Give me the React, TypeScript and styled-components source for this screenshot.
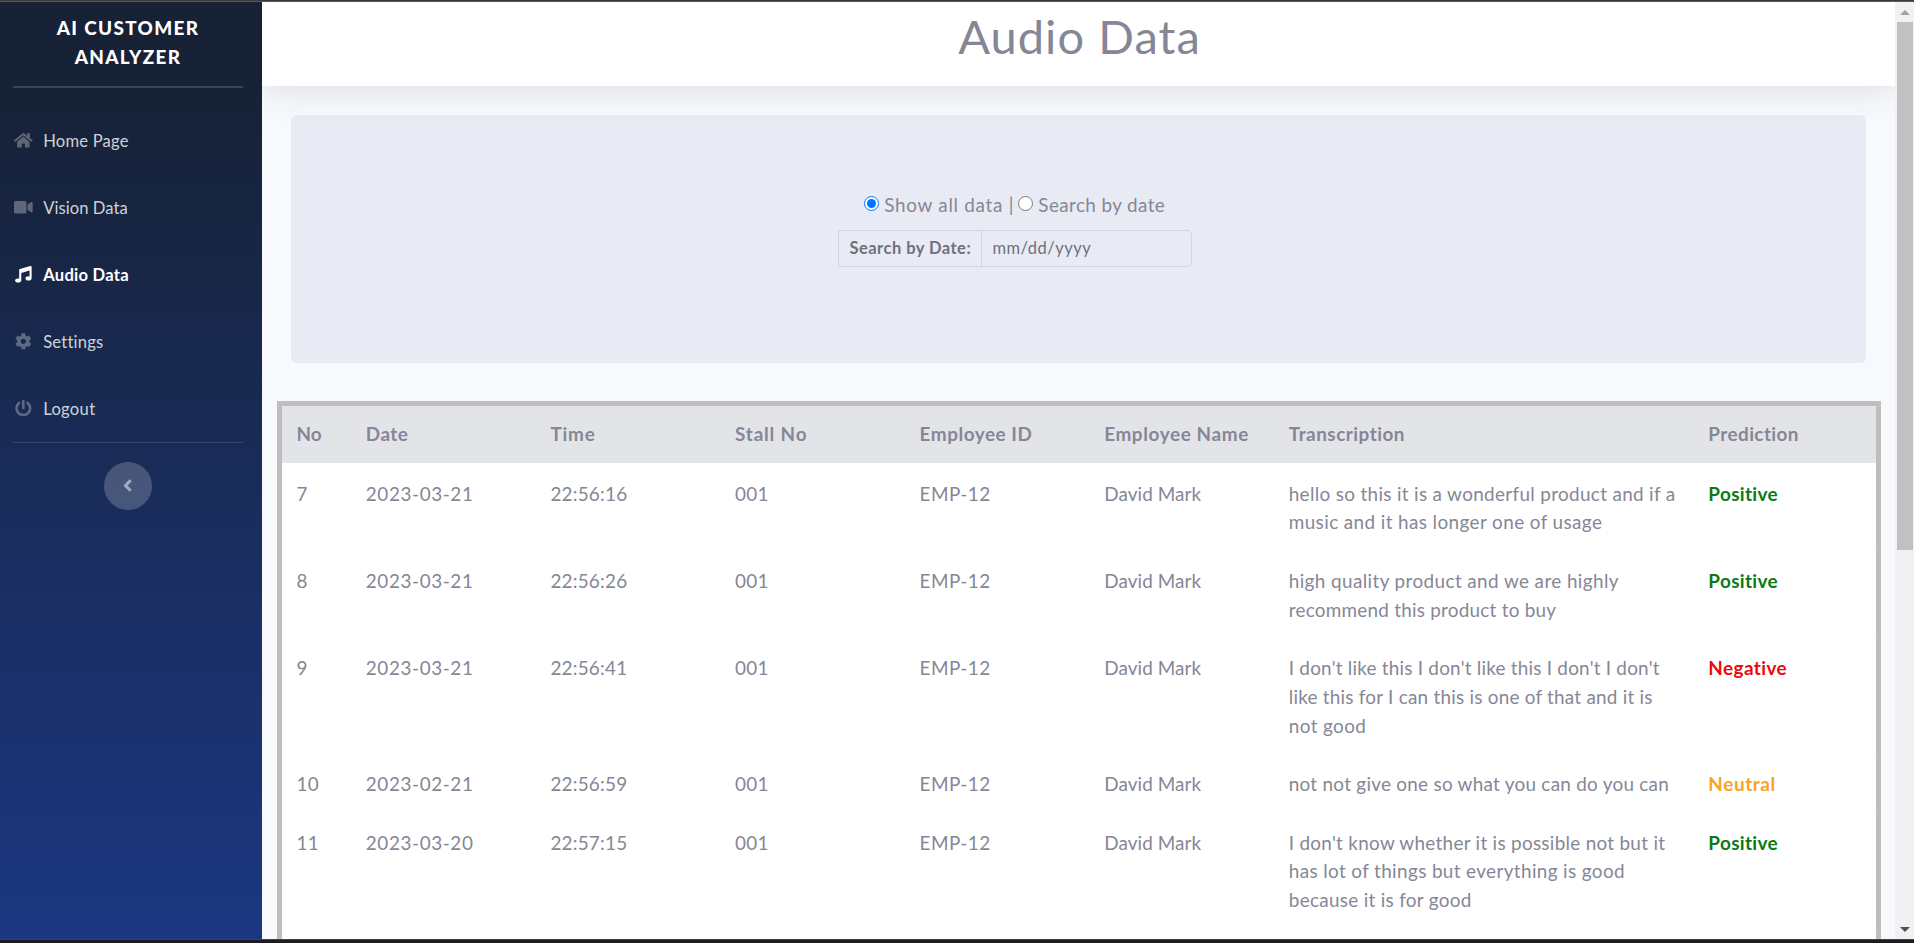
import React from 'react';
import styled, { createGlobalStyle } from 'styled-components';
import { FaHome, FaVideo, FaMusic, FaCog, FaPowerOff, FaAngleLeft } from 'react-icons/fa';
import type { IconType } from 'react-icons';

const GlobalStyle = createGlobalStyle`
  *, *::before, *::after { box-sizing: border-box; }
  html, body { margin: 0; height: 100%; overflow: hidden; }
  body {
    font-family: Lato, 'Open Sans', sans-serif;
    font-size: 18.9px;
    line-height: 28.8px;
    color: #858796;
    background: #f8f9fd;
  }
  #root { height: 100%; }
`;

const Screen = styled.div`
  height: 943px;
  display: flex;
  flex-direction: column;
  overflow: hidden;
`;

const TopEdge = styled.div`
  flex: none;
  height: 2px;
  background: #3b393a;
  border-bottom: 1px solid #5a5758;
`;

const BottomEdge = styled.div`
  flex: none;
  height: 4px;
  background: #1d1b1f;
  border-top: 1px solid #434247;
`;

const Body = styled.div`
  flex: 1;
  min-height: 0;
  display: flex;
`;

const Sidebar = styled.nav`
  flex: none;
  width: 262px;
  padding: 0 19px 0 13px;
  background: linear-gradient(180deg, #172237 10%, #1c3782 100%);
`;

const Brand = styled.div`
  display: flex;
  flex-direction: column;
  align-items: center;
  gap: 0.4px;
  width: 230px;
  height: 84px;
  padding-top: 12.2px;
  color: #fff;
  font-weight: 900;
`;

const Track = styled.span<{ $ls: number }>`
  display: block;
  white-space: nowrap;
  letter-spacing: ${(p) => p.$ls}px;
`;

const BrandRule = styled.hr`
  height: 2px;
  margin: 0 0 19px;
  border: 0;
  background: #3a4558;
`;

const MenuItem = styled.a<{ $active?: boolean }>`
  display: flex;
  align-items: center;
  height: 67px;
  color: ${(p) => (p.$active ? '#fff' : 'rgba(255, 255, 255, 0.8)')};
  font-size: 16.6px;
  font-weight: ${(p) => (p.$active ? 700 : 400)};
`;

const MenuLabel = styled(Track)`
  padding-top: 1.6px;
`;

const MenuIcon = styled.span<{ $active?: boolean }>`
  display: flex;
  justify-content: center;
  width: 21px;
  margin-right: 9.2px;
  font-size: 16.6px;
  color: ${(p) => (p.$active ? '#fff' : 'rgba(255, 255, 255, 0.3)')};
  svg { flex: none; width: 1.125em; height: 1em; }
`;

const MenuRule = styled.hr`
  height: 1px;
  margin: 0 0 19px;
  border: 0;
  background: #36456d;
`;

const Collapse = styled.button`
  display: flex;
  align-items: center;
  justify-content: center;
  width: 48px;
  height: 48px;
  margin: 0 0 0 91px;
  padding: 0;
  border: 0;
  border-radius: 50%;
  background: rgba(255, 255, 255, 0.2);
  color: rgba(255, 255, 255, 0.5);
  font-size: 19.2px;
`;

const Content = styled.main`
  flex: 1;
  min-width: 0;
  display: flex;
  flex-direction: column;
  overflow: hidden;
  background: #f8f9fd;
`;

const Header = styled.header`
  flex: none;
  height: 84px;
  display: flex;
  justify-content: center;
  background: #fff;
  box-shadow: 0 2.9px 33.6px 0 rgba(58, 59, 69, 0.15);
`;

const Title = styled.h1`
  margin: 5.4px 0 0 2px;
  font-size: 47px;
  line-height: 58px;
  font-weight: 400;
  letter-spacing: 1.05px;
`;

const Panel = styled.section`
  flex: none;
  height: 248px;
  margin: 29px 29px 38px;
  padding: 76px 128px 0 0;
  display: flex;
  flex-direction: column;
  align-items: center;
  border-radius: 6px;
  background: #e8ebf4;
  z-index: 1;
`;

const Choices = styled.div`
  display: flex;
  align-items: center;
  height: 29px;
  margin-bottom: 10px;
`;

const Radio = styled.input`
  width: 15px;
  height: 15px;
  margin: 0 5.4px 5px 0;
`;

const Divider = styled.span`
  margin: 0 4.5px 0 5.5px;
`;

const DateField = styled.div`
  display: flex;
  width: 354px;
  height: 37px;
  border: 1px solid #d1d3e2;
  border-radius: 0 5px 5px 0;
  color: #6e707e;
  font-size: 16.5px;
  line-height: 35px;
`;

const DateLabel = styled.label`
  width: 143px;
  padding-left: 11px;
  border-right: 1px solid #d1d3e2;
  font-weight: 700;
`;

const DateValue = styled.div`
  padding-left: 11px;
`;

const Table = styled.div`
  flex: none;
  width: 1604px;
  height: 700px;
  margin-left: 15px;
  border: 5px solid #c2bdbd;
  background: #fff;
`;

const TableBody = styled.div`
  padding-top: 2.2px;
`;

const Row = styled.div<{ $head?: boolean }>`
  display: grid;
  grid-template-columns: 69.4px repeat(5, 184.6px) 419.6px 1fr;
  padding: ${(p) => (p.$head ? '14px 0 14.2px' : '14.4px 0 14.3px')};
  border-bottom: ${(p) => (p.$head ? '0' : '1px solid #fcfcfd')};
  background: ${(p) => (p.$head ? '#e3e4e8' : 'transparent')};
  font-weight: ${(p) => (p.$head ? 700 : 400)};
`;

const Cell = styled.div`
  padding-left: 14.4px;
`;

const tones = { Positive: '#0b7a12', Negative: '#ea0a0a', Neutral: '#faa21e' };
type Tone = keyof typeof tones;

const Verdict = styled(Cell)<{ $tone: Tone }>`
  color: ${(p) => tones[p.$tone]};
  font-weight: 700;
`;

const ScrollBar = styled.div`
  flex: none;
  width: 19px;
  display: flex;
  flex-direction: column;
  align-items: center;
  padding: 8px 0 7px;
  background: #f1f1f1;
`;

const Arrow = styled.svg`
  flex: none;
  display: block;
  width: 10px;
  height: 5px;
`;

const Thumb = styled.div`
  width: 16px;
  height: 528px;
  margin: 7px 0 auto;
  background: #c1c1c1;
`;

type Line = [text: string, spacing: number];

const menu: { icon: IconType; label: Line; active?: boolean }[] = [
  { icon: FaHome, label: ['Home Page', 0.2] },
  { icon: FaVideo, label: ['Vision Data', 0.05] },
  { icon: FaMusic, label: ['Audio Data', 0.25], active: true },
  { icon: FaCog, label: ['Settings', 0.2] },
  { icon: FaPowerOff, label: ['Logout', 0.3] },
];

const columns: Line[] = [
  ['No', 0.04],
  ['Date', 0.5],
  ['Time', 0.8],
  ['Stall No', 0.85],
  ['Employee ID', 0.55],
  ['Employee Name', 0.62],
  ['Transcription', 0.5],
  ['Prediction', 0.42],
];

const verdictSpacing: Record<Tone, number> = { Positive: 0.35, Negative: 0.42, Neutral: 0.6 };

const records: { no: string; date: string; time: string; lines: Line[]; verdict: Tone }[] = [
  {
    no: '7', date: '2023-03-21', time: '22:56:16', verdict: 'Positive',
    lines: [['hello so this it is a wonderful product and if a', 0.33], ['music and it has longer one of usage', 0.4]],
  },
  {
    no: '8', date: '2023-03-21', time: '22:56:26', verdict: 'Positive',
    lines: [['high quality product and we are highly', 0.4], ['recommend this product to buy', 0.24]],
  },
  {
    no: '9', date: '2023-03-21', time: '22:56:41', verdict: 'Negative',
    lines: [
      ["I don't like this I don't like this I don't I don't", 0.225],
      ['like this for I can this is one of that and it is', 0.235],
      ['not good', 0.4],
    ],
  },
  {
    no: '10', date: '2023-02-21', time: '22:56:59', verdict: 'Neutral',
    lines: [['not not give one so what you can do you can', 0.27]],
  },
  {
    no: '11', date: '2023-03-20', time: '22:57:15', verdict: 'Positive',
    lines: [
      ["I don't know whether it is possible not but it", 0.29],
      ['has lot of things but everything is good', 0.375],
      ['because it is for good', 0.3],
    ],
  },
];

export default function App() {
  return (
    <Screen>
      <GlobalStyle />
      <TopEdge />
      <Body>
        <Sidebar>
          <Brand>
            <Track $ls={1.34}>AI CUSTOMER</Track>
            <Track $ls={1.3}>ANALYZER</Track>
          </Brand>
          <BrandRule />
          {menu.map(({ icon: Icon, label, active }) => (
            <MenuItem key={label[0]} $active={active}>
              <MenuIcon $active={active}><Icon /></MenuIcon>
              <MenuLabel $ls={label[1]}>{label[0]}</MenuLabel>
            </MenuItem>
          ))}
          <MenuRule />
          <Collapse aria-label="Collapse menu"><FaAngleLeft /></Collapse>
        </Sidebar>
        <Content>
          <Header>
            <Title>Audio Data</Title>
          </Header>
          <Panel>
            <Choices>
              <Radio type="radio" name="mode" defaultChecked />
              <Track $ls={0.72}>Show all data</Track>
              <Divider>|</Divider>
              <Radio type="radio" name="mode" />
              <Track $ls={0.39}>Search by date</Track>
            </Choices>
            <DateField>
              <DateLabel><Track $ls={0.47}>Search by Date:</Track></DateLabel>
              <DateValue><Track $ls={0.49}>mm/dd/yyyy</Track></DateValue>
            </DateField>
          </Panel>
          <Table>
            <Row $head>
              {columns.map(([text, ls]) => (
                <Cell key={text}><Track $ls={ls}>{text}</Track></Cell>
              ))}
            </Row>
            <TableBody>
              {records.map((r) => (
                <Row key={r.no}>
                  <Cell><Track $ls={0.3}>{r.no}</Track></Cell>
                  <Cell><Track $ls={0.6}>{r.date}</Track></Cell>
                  <Cell><Track $ls={0.22}>{r.time}</Track></Cell>
                  <Cell><Track $ls={0.29}>001</Track></Cell>
                  <Cell><Track $ls={0.45}>EMP-12</Track></Cell>
                  <Cell><Track $ls={0.1}>David Mark</Track></Cell>
                  <Cell>
                    {r.lines.map(([text, ls]) => <Track key={text} $ls={ls}>{text}</Track>)}
                  </Cell>
                  <Verdict $tone={r.verdict}>
                    <Track $ls={verdictSpacing[r.verdict]}>{r.verdict}</Track>
                  </Verdict>
                </Row>
              ))}
            </TableBody>
          </Table>
        </Content>
        <ScrollBar>
          <Arrow viewBox="0 0 10 5"><path d="M0 5L5 0L10 5Z" fill="#a3a3a3" /></Arrow>
          <Thumb />
          <Arrow viewBox="0 0 10 5"><path d="M0 0L5 5L10 0Z" fill="#505050" /></Arrow>
        </ScrollBar>
      </Body>
      <BottomEdge />
    </Screen>
  );
}
